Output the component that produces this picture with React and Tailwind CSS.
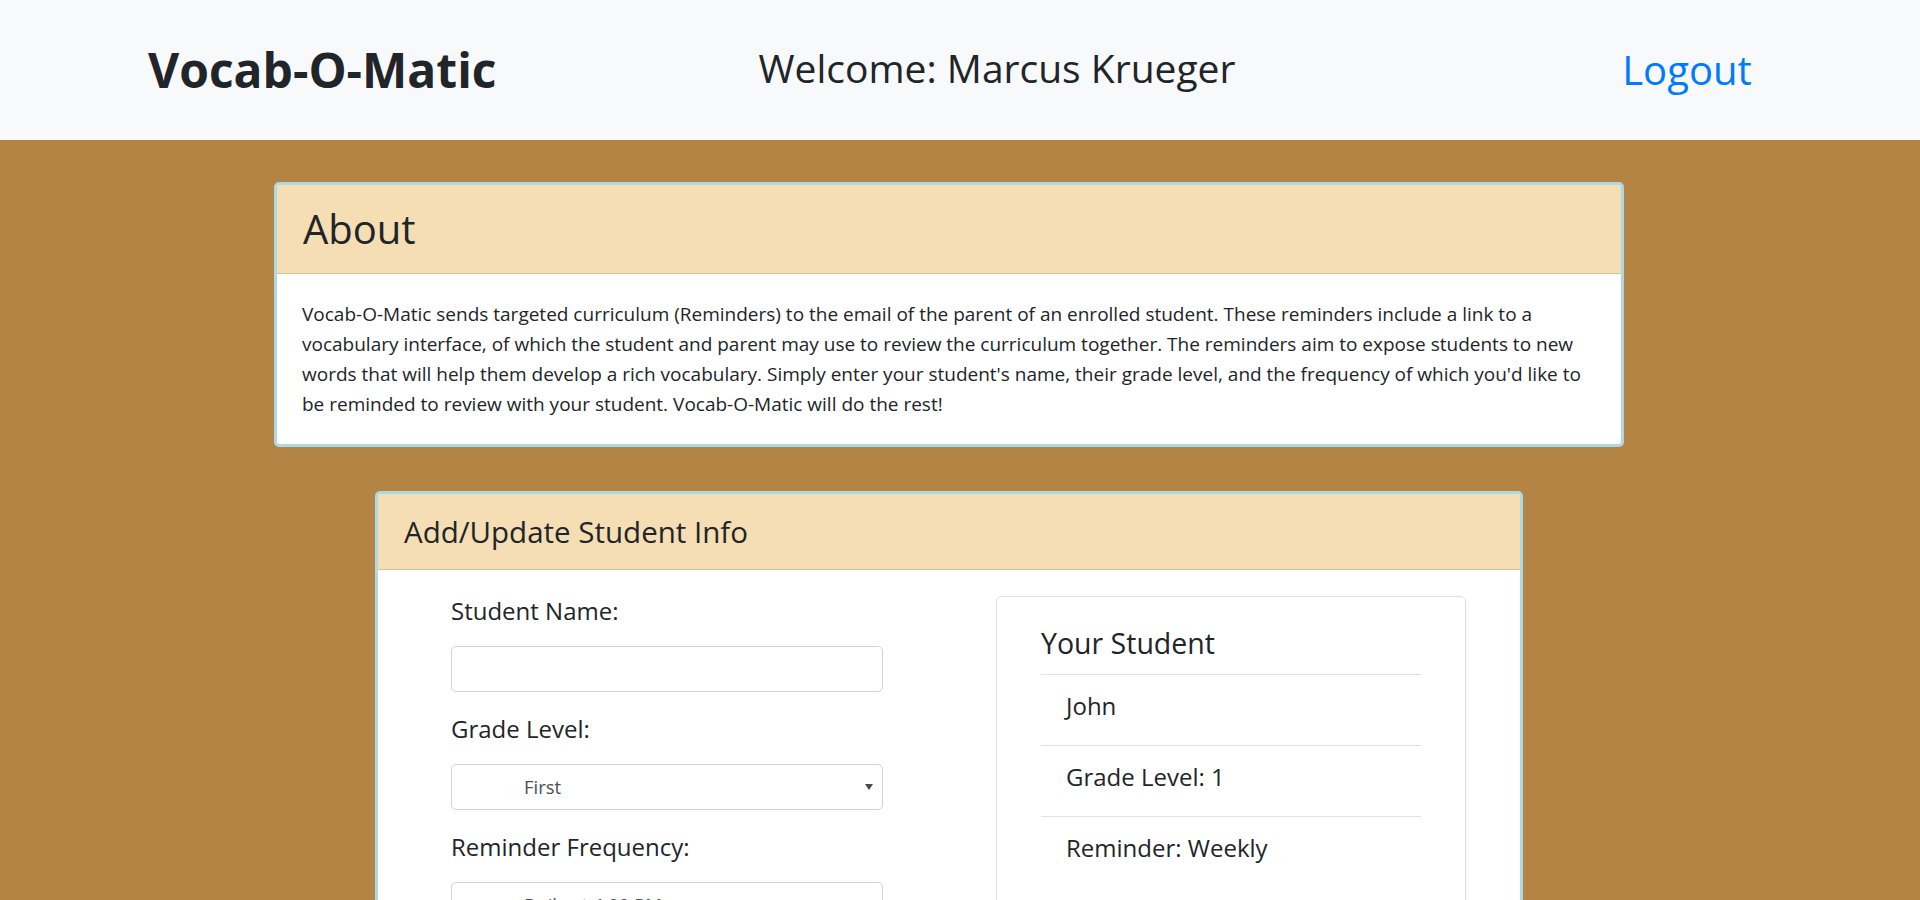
import React from "react";

const aboutLines = [
  "Vocab-O-Matic sends targeted curriculum (Reminders) to the email of the parent of an enrolled student. These reminders include a link to a",
  "vocabulary interface, of which the student and parent may use to review the curriculum together. The reminders aim to expose students to new",
  "words that will help them develop a rich vocabulary. Simply enter your student's name, their grade level, and the frequency of which you'd like to",
  "be reminded to review with your student. Vocab-O-Matic will do the rest!",
];

const students = [
  { label: "John" },
  { label: "Grade Level: 1" },
  { label: "Reminder: Weekly" },
];

function Caret() {
  return (
    <svg
      className="pointer-events-none absolute right-[10px] top-1/2 -translate-y-1/2"
      width="8"
      height="7"
      viewBox="0 0 8 7"
    >
      <path d="M0 0.5 H8 L4 6.5 Z" fill="#4a4a4a" />
    </svg>
  );
}

function Field({ label, children }) {
  return (
    <div>
      <label className="mb-[21px] block text-[24px] font-medium leading-[29px]">
        {label}
      </label>
      <div className="relative mb-[22px]">{children}</div>
    </div>
  );
}

export default function App() {
  return (
    <div className="min-h-screen bg-[#b38443] font-['Open_Sans',sans-serif] text-[#212529]">
      {/* ===== NAVBAR ===== */}
      <nav className="flex h-[140px] items-center bg-[#f8f9fa] pl-[148px]">
        <div className="w-[504px]">
          <h1 className="text-[48px] font-bold leading-[1.2]">Vocab-O-Matic</h1>
        </div>
        <div className="w-[690px] text-center">
          <h1 className="-mt-[4px] text-[39px] leading-[1.2]">
            Welcome: Marcus Krueger
          </h1>
        </div>
        <div className="ml-[195px] w-[300px] text-center">
          <a href="#" className="text-[40px] leading-[1.2] text-[#007bff]">
            Logout
          </a>
        </div>
      </nav>

      <main className="pt-[42px] pr-[22px] pb-[150px]">
        {/* ===== ABOUT ===== */}
        <section className="mx-auto w-[1350px] overflow-hidden rounded-[5px] border-[3px] border-[#add8e6] bg-white">
          <div className="border-b border-[#d6c29d] bg-[#f5deb3] px-[26px] py-[20px]">
            <h2 className="text-[40px] font-medium leading-[48px]">About</h2>
          </div>
          <div className="p-[25px]">
            <p className="text-[19px] leading-[30px]">
              {aboutLines.map((line) => (
                <span key={line} className="block whitespace-nowrap">
                  {line}
                </span>
              ))}
            </p>
          </div>
        </section>

        {/* ===== STUDENT FORM ===== */}
        <section className="mx-auto mt-[44px] w-[1148px] overflow-hidden rounded-[5px] border-[3px] border-[#add8e6] bg-white">
          <div className="border-b border-[#d6c29d] bg-[#f5deb3] px-[26px] py-[21px]">
            <h3 className="text-[29.5px] font-medium leading-[33px]">
              Add/Update Student Info
            </h3>
          </div>

          <div className="grid grid-cols-2 gap-x-[30px] px-[22px] pt-[26px] pb-[26px]">
            <form className="mx-auto w-[432px]">
              <Field label="Student Name:">
                <input
                  type="text"
                  className="h-[46px] w-full rounded-[5px] border border-[#ced4da] bg-white px-3 text-[18px] text-[#495057] outline-none"
                />
              </Field>
              <Field label="Grade Level:">
                <select
                  defaultValue="1"
                  className="h-[46px] w-full appearance-none rounded-[5px] border border-[#ced4da] bg-white pl-[72px] text-[18.5px] text-[#495057] outline-none"
                >
                  <option value="K">Kindergarten</option>
                  <option value="1">First</option>
                  <option value="2">Second</option>
                  <option value="3">Third</option>
                </select>
                <Caret />
              </Field>
              <Field label="Reminder Frequency:">
                <select
                  defaultValue="daily"
                  className="h-[46px] w-full appearance-none rounded-[5px] border border-[#ced4da] bg-white pl-[72px] text-[18.5px] text-[#495057] outline-none"
                >
                  <option value="daily">Daily at 4:00 PM</option>
                  <option value="weekly">Weekly</option>
                </select>
                <Caret />
              </Field>
              <button
                type="button"
                className="h-[46px] w-full rounded-[5px] bg-[#007bff] text-[18px] text-white"
              >
                Submit
              </button>
            </form>

            <div className="mx-auto w-[470px] self-start rounded-[5px] border border-[#dfdfdf] px-[44px] pt-[29px] pb-[40px]">
              <h3 className="mb-[14px] text-[28.5px] font-medium leading-[34px]">
                Your Student
              </h3>
              <ul>
                {students.map((s) => (
                  <li
                    key={s.label}
                    className="border-t border-[#dee2e6] pt-[17px] pb-[25px] pl-[25px] text-[24px] font-medium leading-[28px]"
                  >
                    {s.label}
                  </li>
                ))}
              </ul>
            </div>
          </div>
        </section>
      </main>
    </div>
  );
}
